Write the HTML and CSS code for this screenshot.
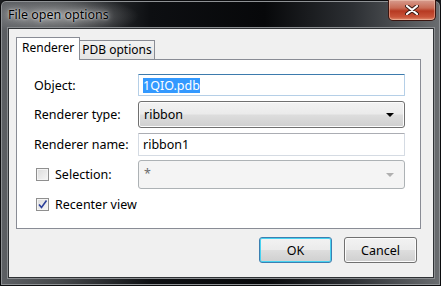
FILE: index.html
```html
<!DOCTYPE html>
<html lang="en">

<head>
  <meta charset="UTF-8">
  <title>File open options</title>
  <link rel="stylesheet" href="styles.css">
</head>

<body>
  <div class="window">
    <div class="titlebar">
      <span class="title">File open options</span>
      <button class="close-btn" aria-label="Close">
        <svg width="14" height="10" viewBox="0 0 14 10">
          <path d="M2 1 L12 9 M12 1 L2 9" stroke="#3a1a14" stroke-width="4" stroke-linecap="round" />
          <path d="M2 1 L12 9 M12 1 L2 9" stroke="#fff" stroke-width="2.2" stroke-linecap="round" />
        </svg>
      </button>
    </div>

    <div class="client">
      <div class="tabs">
        <div class="tab active">Renderer</div>
        <div class="tab">PDB options</div>
      </div>

      <div class="tab-pane">
        <div class="row row-object">
          <label class="field-label">Object:</label>
          <div class="input focused"><span class="selected">1QIO.pdb</span></div>
        </div>

        <div class="row row-type">
          <label class="field-label">Renderer type:</label>
          <div class="combo">
            <span>ribbon</span>
            <span class="arrow"></span>
          </div>
        </div>

        <div class="row row-name">
          <label class="field-label">Renderer name:</label>
          <div class="input">ribbon1</div>
        </div>

        <div class="row row-sel">
          <label class="field-label check-label"><span class="checkbox"></span>Selection:</label>
          <div class="combo disabled">
            <span class="star">*</span>
            <span class="arrow"></span>
          </div>
        </div>

        <div class="row row-recenter">
          <label class="check-label">
            <span class="checkbox checked">
              <svg width="11" height="11" viewBox="0 0 11 11">
                <path d="M2 5.5 L4.5 8.5 L9.5 1.5" fill="none" stroke="#2b3f9a" stroke-width="1.6" />
              </svg>
            </span>Recenter view
          </label>
        </div>
      </div>

      <div class="buttons">
        <button class="btn default">OK</button>
        <button class="btn">Cancel</button>
      </div>
    </div>
  </div>
</body>

</html>
```

FILE: styles.css
```css
html, body {
  margin: 0;
  padding: 0;
}

body {
  width: 441px;
  height: 286px;
  overflow: hidden;
  background: #1a1c1f;
  font-family: 'Segoe UI', 'Noto Sans', sans-serif;
  font-size: 12px;
  color: #000;
}

.window {
  width: 441px;
  height: 286px;
  box-sizing: border-box;
  border: 1px solid #0b0c0e;
  border-radius: 6px 6px 0 0;
  background:
    radial-gradient(ellipse 80px 20px at 58px 15px, rgba(190, 190, 190, 0.6), rgba(190, 190, 190, 0) 100%),
    linear-gradient(to right, #5d6064 0%, #44474a 14%, #0d0f12 34%, #07080a 60%, #2c2f33 80%, #6a6d70 100%);
  display: flex;
  flex-direction: column;
  box-shadow: inset 0 0 0 1px #8e9194;
}

.titlebar {
  height: 27px;
  display: flex;
  align-items: flex-start;
  justify-content: space-between;
  padding: 0 4px 0 7px;
}

.title {
  margin-top: 5px;
  font-size: 12.5px;
  color: #000;
  text-shadow: 0 0 6px rgba(255, 255, 255, 0.9), 0 0 2px rgba(255, 255, 255, 0.8);
}

.close-btn {
  margin-top: -1px;
  width: 48px;
  height: 21px;
  border: 1px solid #3a1510;
  border-top: none;
  border-radius: 0 0 5px 5px;
  background: linear-gradient(to bottom, #d79c8e 0%, #c86b55 40%, #b73a22 55%, #c9553a 85%, #e08d6f 100%);
  box-shadow: inset 0 0 0 1px rgba(255, 220, 200, 0.4);
  display: flex;
  align-items: center;
  justify-content: center;
  padding: 0;
}

.client {
  flex: 1;
  margin: 0 6px 7px 7px;
  background: #f0f0f0;
  border: 1px solid #2f3235;
  box-shadow: 0 0 0 1px #8a8d90;
  padding: 8px 12px 0 7px;
  display: flex;
  flex-direction: column;
}

.tabs {
  display: flex;
  align-items: flex-end;
  height: 22px;
  position: relative;
  z-index: 1;
}

.tab {
  height: 19px;
  box-sizing: border-box;
  padding: 0 2px;
  border: 1px solid #898c95;
  border-bottom: none;
  background: linear-gradient(to bottom, #f2f2f2, #e4e4e4);
  line-height: 18px;
  font-size: 12px;
}

.tab + .tab {
  border-left: none;
}

.tab.active {
  height: 23px;
  margin-bottom: -1px;
  background: #fff;
  padding: 0 5px;
  line-height: 19px;
}

.tab-pane {
  height: 170px;
  box-sizing: border-box;
  background: #fff;
  border: 1px solid #898c95;
  padding: 14px 15px 0 17px;
  display: flex;
  flex-direction: column;
}

.row {
  display: flex;
  align-items: center;
}

.row-object { height: 22px; }
.row-type { height: 27px; margin-top: 5px; }
.row-name { height: 23px; margin-top: 5px; }
.row-sel { height: 29px; margin-top: 4px; }
.row-recenter { height: 16px; margin-top: 7px; }

.field-label {
  width: 104px;
  flex-shrink: 0;
  font-size: 12.5px;
}

.check-label {
  display: flex;
  align-items: center;
  font-size: 12.5px;
}

.checkbox {
  width: 11px;
  height: 11px;
  margin: 0 6px 0 2px;
  border: 1px solid #8f8f8f;
  background: linear-gradient(135deg, #dcdcdc, #f6f6f6);
  box-shadow: inset 0 0 0 1px #f4f4f4;
  display: flex;
  align-items: center;
  justify-content: center;
}

.input {
  flex: 1;
  height: 100%;
  box-sizing: border-box;
  border: 1px solid #d5dbe3;
  border-top-color: #abadb3;
  padding: 0 4px;
  display: flex;
  align-items: center;
  font-size: 12.5px;
  border-radius: 1px;
}

.input.focused {
  border-color: #b5cfe7;
  border-top-color: #3d7bad;
}

.selected {
  background: #3399ff;
  color: #fff;
  line-height: 15px;
}

.combo {
  flex: 1;
  height: 100%;
  box-sizing: border-box;
  border: 1px solid #707070;
  border-radius: 3px;
  background: linear-gradient(to bottom, #f2f2f2 0%, #ebebeb 48%, #dddddd 52%, #cfcfcf 100%);
  box-shadow: inset 0 0 0 1px #fcfcfc;
  display: flex;
  align-items: center;
  justify-content: space-between;
  padding: 0 10px 0 5px;
  font-size: 12.5px;
}

.combo .arrow {
  width: 0;
  height: 0;
  border-left: 4px solid transparent;
  border-right: 4px solid transparent;
  border-top: 4px solid #000;
}

.combo.disabled {
  background: #f4f4f4;
  border-color: #adb2b5;
  box-shadow: none;
  color: #6d6d6d;
}

.combo.disabled .arrow {
  border-top-color: #b0b0b0;
}

.star {
  align-self: flex-start;
  margin-top: 4px;
}

.buttons {
  display: flex;
  justify-content: flex-end;
  gap: 12px;
  margin-top: 8px;
  padding-right: 4px;
}

.btn {
  width: 73px;
  height: 26px;
  border: 1px solid #707070;
  border-radius: 3px;
  background: linear-gradient(to bottom, #f2f2f2 0%, #ebebeb 48%, #dddddd 52%, #cfcfcf 100%);
  box-shadow: inset 0 0 0 1px #fcfcfc;
  font-family: 'Segoe UI', 'Noto Sans', sans-serif;
  font-size: 12.5px;
  color: #000;
  padding: 0;
}

.btn.default {
  border-color: #3c7fb1;
  box-shadow: inset 0 0 0 1px #48d2f0;
}
```
